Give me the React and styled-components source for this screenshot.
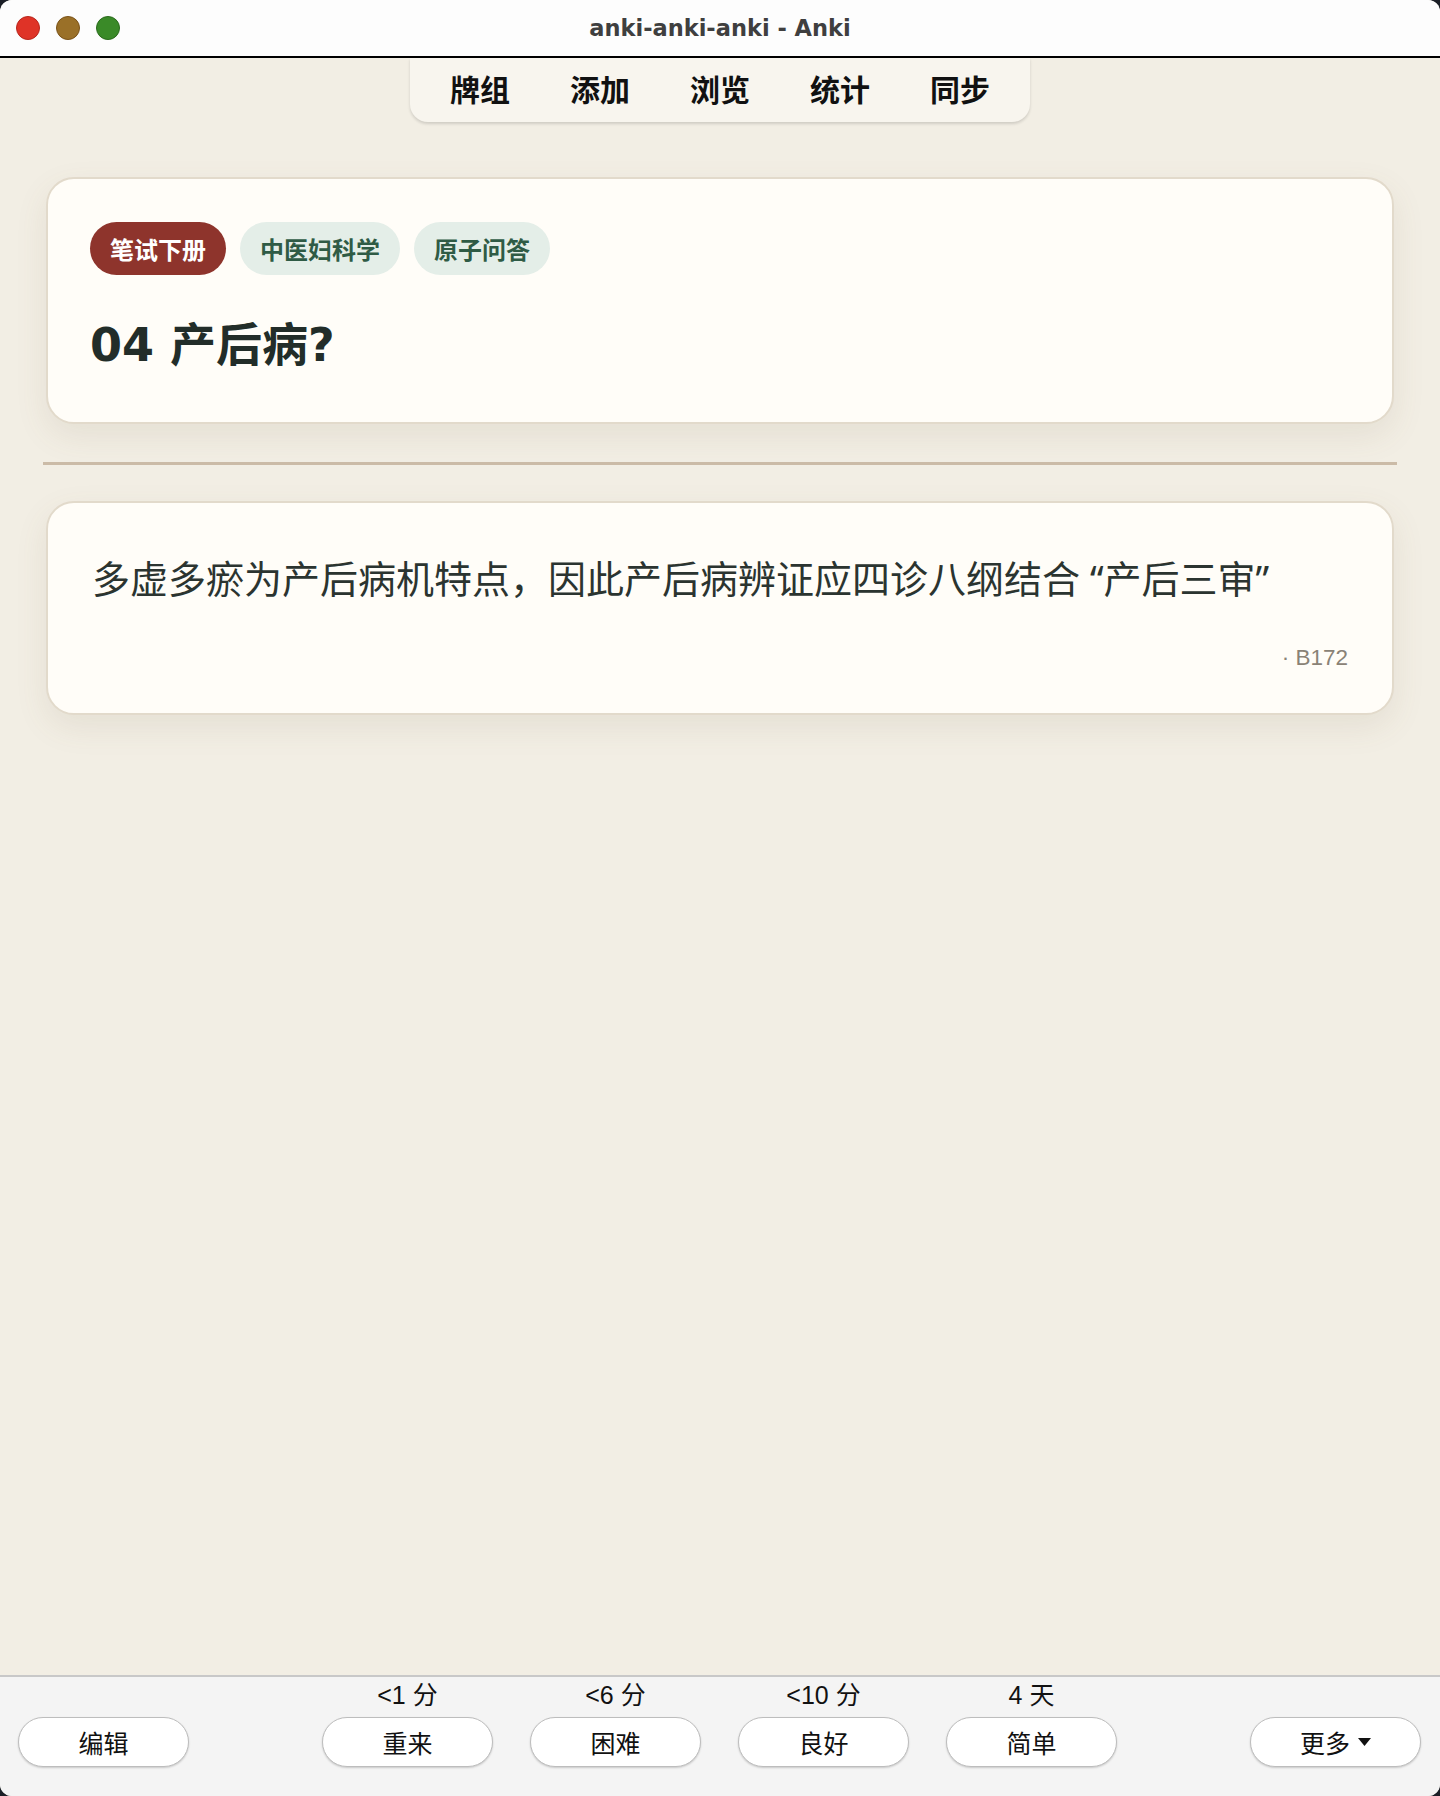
import React from "react";
import styled, { createGlobalStyle } from "styled-components";

const GlobalStyle = createGlobalStyle`
  html, body, #root {
    margin: 0;
    padding: 0;
    height: 100%;
  }
  body {
    background: #1b1f27;
    font-family: "Noto Sans", "Noto Sans CJK SC", sans-serif;
  }
  * { box-sizing: border-box; }
`;

const Window = styled.div`
  height: 1796px;
  display: flex;
  flex-direction: column;
  border-radius: 12px;
  overflow: hidden;
  background: #f2eee4;
`;

const TitleBar = styled.div`
  height: 58px;
  flex-shrink: 0;
  display: grid;
  grid-template-columns: 1fr auto 1fr;
  align-items: center;
  background: #fdfdfd;
  border-bottom: 2px solid #000;
  padding: 0 16px;
`;

const Lights = styled.div`
  display: flex;
  gap: 16px;
`;

const Light = styled.span`
  width: 24px;
  height: 24px;
  border-radius: 50%;
  background: ${(p) => p.$fill};
  border: 1.5px solid ${(p) => p.$edge};
`;

const WindowTitle = styled.div`
  font-family: "DejaVu Sans", "Liberation Sans", sans-serif;
  font-size: 22.5px;
  font-weight: 700;
  color: #3f3f3f;
`;

const Main = styled.main`
  flex: 1;
  display: flex;
  flex-direction: column;
  align-items: center;
`;

const NavBar = styled.nav`
  width: 620px;
  height: 64px;
  padding: 0 10px 5px;
  display: flex;
  align-items: center;
  background: #f8f5ee;
  border-radius: 0 0 18px 18px;
  box-shadow: 0 2px 3px rgba(0, 0, 0, 0.14);
`;

const NavItem = styled.a`
  flex: 1;
  text-align: center;
  font-family: "Noto Sans CJK SC", sans-serif;
  font-size: 30px;
  font-weight: 700;
  color: #111;
  line-height: 1;
`;

const Content = styled.div`
  width: 100%;
  padding: 55px 46px 0;
  display: flex;
  flex-direction: column;
`;

const Card = styled.section`
  background: #fffdf8;
  border: 2px solid #e2dacb;
  border-radius: 28px;
  box-shadow: 0 12px 32px rgba(120, 100, 70, 0.1);
  padding: ${(p) => p.$pad};
`;

const Tags = styled.div`
  display: flex;
  gap: 14px;
`;

const Tag = styled.span`
  height: 53px;
  padding: 0 20px;
  display: inline-flex;
  align-items: center;
  border-radius: 27px;
  font-family: "Noto Sans CJK SC", sans-serif;
  font-size: 24px;
  font-weight: 700;
  background: ${(p) => (p.$primary ? "#8e342c" : "#e4eee8")};
  color: ${(p) => (p.$primary ? "#fff" : "#2f5b45")};
`;

const Question = styled.h1`
  margin: 43px 0 0;
  font-family: "DejaVu Sans", "Noto Sans CJK SC", sans-serif;
  font-size: 46px;
  font-weight: 700;
  line-height: 55px;
  color: #222d29;
`;

const Divider = styled.hr`
  margin: 38px -3px 36px;
  border: none;
  height: 3px;
  background: #cbbba7;
`;

const Answer = styled.p`
  margin: 0;
  font-family: "Noto Sans", "Noto Sans CJK SC", sans-serif;
  font-size: 38px;
  font-weight: 400;
  line-height: 60px;
  color: #2b3430;
`;

const Punct = styled.span``;

const Source = styled.div`
  margin-top: 36px;
  text-align: right;
  font-family: "Liberation Sans", "Noto Sans", sans-serif;
  font-size: 22.5px;
  line-height: 28px;
  color: #8a8276;
`;

const BottomBar = styled.footer`
  flex-shrink: 0;
  height: 121px;
  border-top: 2px solid #c8c8c8;
  background: #f4f4f4;
  padding: 4px 19px 29px 18px;
  display: flex;
  align-items: flex-end;
  justify-content: space-between;
`;

const AnswerGroup = styled.div`
  display: flex;
  gap: 37px;
`;

const Choice = styled.div`
  display: flex;
  flex-direction: column;
  align-items: center;
  gap: 9px;
`;

const Interval = styled.span`
  font-family: "Liberation Sans", "Noto Sans CJK SC", sans-serif;
  font-size: 25px;
  line-height: 26px;
  color: #111;
`;

const Button = styled.button`
  width: 171px;
  height: 50px;
  border-radius: 25px;
  border: 1.5px solid #bdbdbd;
  background: #fff;
  box-shadow: 0 1px 2px rgba(0, 0, 0, 0.18);
  display: flex;
  align-items: center;
  justify-content: center;
  gap: 8px;
  font-family: "Noto Sans CJK SC", sans-serif;
  font-size: 25px;
  color: #111;
  padding: 0;
`;

const choices = [
  { label: "<1 分", text: "重来" },
  { label: "<6 分", text: "困难" },
  { label: "<10 分", text: "良好" },
  { label: "4 天", text: "简单" },
];

export default function App() {
  return (
    <>
      <GlobalStyle />
      <Window>
        <TitleBar>
          <Lights>
            <Light $fill="#df3327" $edge="#b8261c" />
            <Light $fill="#9a7028" $edge="#7a5218" />
            <Light $fill="#3a8a28" $edge="#2a6a1c" />
          </Lights>
          <WindowTitle>anki-anki-anki - Anki</WindowTitle>
          <div />
        </TitleBar>

        <Main>
          <NavBar>
            <NavItem>牌组</NavItem>
            <NavItem>添加</NavItem>
            <NavItem>浏览</NavItem>
            <NavItem>统计</NavItem>
            <NavItem>同步</NavItem>
          </NavBar>

          <Content>
            <Card $pad="43px 42px 49px">
              <Tags>
                <Tag $primary>笔试下册</Tag>
                <Tag>中医妇科学</Tag>
                <Tag>原子问答</Tag>
              </Tags>
              <Question>04 产后病?</Question>
            </Card>

            <Divider />

            <Card $pad="45px 44px 41px">
              <Answer>
                多虚多瘀为产后病机特点<Punct>，</Punct>因此产后病辨证应四诊八纲结合 “产后三审”
              </Answer>
              <Source>· B172</Source>
            </Card>
          </Content>
        </Main>

        <BottomBar>
          <Button>编辑</Button>
          <AnswerGroup>
            {choices.map((c) => (
              <Choice key={c.text}>
                <Interval>{c.label}</Interval>
                <Button>{c.text}</Button>
              </Choice>
            ))}
          </AnswerGroup>
          <Button>
            更多
            <svg width="13" height="8" viewBox="0 0 13 8">
              <path d="M0 0h13L6.5 8z" fill="#111" />
            </svg>
          </Button>
        </BottomBar>
      </Window>
    </>
  );
}
